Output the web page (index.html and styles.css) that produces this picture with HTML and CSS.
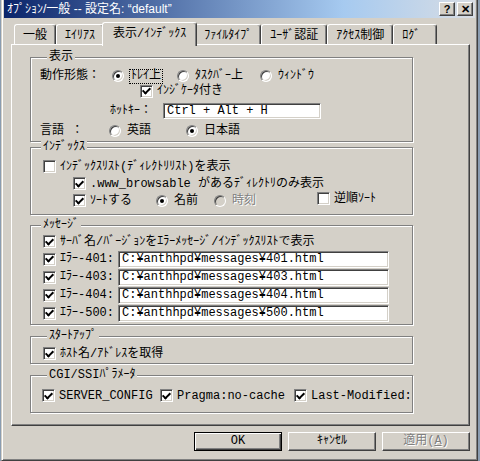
FILE: index.html
```html
<!DOCTYPE html>
<html lang="ja">
<head>
    <meta charset="UTF-8">
    <meta name="viewport" content="width=device-width, initial-scale=1.0">
    <title>オプション/一般</title>
    <link rel="stylesheet" href="styles.css">
</head>
<body>

<div class="window">
    <div class="titlebar">
        <span class="title">ｵﾌﾟｼｮﾝ/一般 -- 設定名: “default”</span>
        <div class="caption-buttons">
            <span class="caption-btn">?</span>
            <span class="caption-btn">✕</span>
        </div>
    </div>

    <div class="tabs">
        <div class="tab">一般</div>
        <div class="tab">ｴｲﾘｱｽ</div>
        <div class="tab active">表示/ｲﾝﾃﾞｯｸｽ</div>
        <div class="tab">ﾌｧｲﾙﾀｲﾌﾟ</div>
        <div class="tab">ﾕｰｻﾞ認証</div>
        <div class="tab">ｱｸｾｽ制御</div>
        <div class="tab tab-last">ﾛｸﾞ</div>
    </div>

    <div class="panel">
        <div class="group g-display">
            <div class="group-title indent">表示</div>
            <div class="row row-16">
                <span class="field-label mode-label">動作形態：</span>
                <span class="option opt-tray"><span class="radio on"></span><span class="focus">ﾄﾚｲ上</span></span>
                <span class="option opt-task"><span class="radio"></span>ﾀｽｸﾊﾞｰ上</span>
                <span class="option"><span class="radio"></span>ｳｨﾝﾄﾞｳ</span>
            </div>
            <div class="row row-14">
                <span class="option indicator"><span class="box on"></span>ｲﾝｼﾞｹｰﾀ付き</span>
            </div>
            <div class="row row-25">
                <span class="field-label hotkey-label">ﾎｯﾄｷｰ：</span>
                <span class="textbox hotkey">Ctrl + Alt + H</span>
            </div>
            <div class="row row-16">
                <span class="field-label lang-label">言語 ：</span>
                <span class="option opt-en"><span class="radio"></span>英語</span>
                <span class="option"><span class="radio on"></span>日本語</span>
            </div>
        </div>

        <div class="group g-index">
            <div class="group-title">ｲﾝﾃﾞｯｸｽ</div>
            <div class="row">
                <span class="option first"><span class="box"></span>ｲﾝﾃﾞｯｸｽﾘｽﾄ(ﾃﾞｨﾚｸﾄﾘﾘｽﾄ)を表示</span>
            </div>
            <div class="row">
                <span class="option sub"><span class="box on"></span>.www_browsable があるﾃﾞｨﾚｸﾄﾘのみ表示</span>
            </div>
            <div class="row">
                <span class="option sub opt-sort"><span class="box on"></span>ｿｰﾄする</span>
                <span class="option opt-name"><span class="radio on"></span>名前</span>
                <span class="option opt-time disabled"><span class="radio"></span>時刻</span>
                <span class="option raised"><span class="box"></span>逆順ｿｰﾄ</span>
            </div>
        </div>

        <div class="group g-message">
            <div class="group-title">ﾒｯｾｰｼﾞ</div>
            <div class="row">
                <span class="option first"><span class="box on"></span>ｻｰﾊﾞ名/ﾊﾞｰｼﾞｮﾝをｴﾗｰﾒｯｾｰｼﾞ/ｲﾝﾃﾞｯｸｽﾘｽﾄで表示</span>
            </div>
            <div class="row row-18">
                <span class="option first err-label"><span class="box on"></span>ｴﾗｰ-401:</span>
                <span class="textbox path">C:¥anthhpd¥messages¥401.html</span>
            </div>
            <div class="row row-18">
                <span class="option first err-label"><span class="box on"></span>ｴﾗｰ-403:</span>
                <span class="textbox path">C:¥anthhpd¥messages¥403.html</span>
            </div>
            <div class="row row-18">
                <span class="option first err-label"><span class="box on"></span>ｴﾗｰ-404:</span>
                <span class="textbox path">C:¥anthhpd¥messages¥404.html</span>
            </div>
            <div class="row row-18">
                <span class="option first err-label"><span class="box on"></span>ｴﾗｰ-500:</span>
                <span class="textbox path">C:¥anthhpd¥messages¥500.html</span>
            </div>
        </div>

        <div class="group g-startup">
            <div class="group-title indent">ｽﾀｰﾄｱｯﾌﾟ</div>
            <div class="row">
                <span class="option first"><span class="box on"></span>ﾎｽﾄ名/ｱﾄﾞﾚｽを取得</span>
            </div>
        </div>

        <div class="group g-cgi">
            <div class="group-title indent">CGI/SSIﾊﾟﾗﾒｰﾀ</div>
            <div class="row">
                <span class="option first opt-server"><span class="box on"></span>SERVER_CONFIG</span>
                <span class="option opt-pragma"><span class="box on"></span>Pragma:no-cache</span>
                <span class="option"><span class="box on"></span>Last-Modified:</span>
            </div>
        </div>
    </div>

    <div class="buttons">
        <button class="btn default">OK</button>
        <button class="btn">ｷｬﾝｾﾙ</button>
        <button class="btn" disabled>適用(<u>A</u>)</button>
    </div>
</div>

</body>
</html>
```

FILE: styles.css
```css
body {
    margin: 0;
    background-color: #8a9cb0;
    font-family: "Liberation Mono", "Noto Sans CJK JP", monospace;
    font-size: 12px;
    line-height: 16px;
    color: #000;
    overflow: hidden;
}
.window {
    box-sizing: border-box;
    width: 477px;
    height: 461px;
    margin-left: 1px;
    padding: 0 2px 2px 2px;
    background-color: #d4d0c8;
    border: 1px solid #404040;
    border-top: none;
    border-left-color: #d4d0c8;
    box-shadow: inset 1px 0 0 #fff, inset -1px -1px 0 #808080;
}

/* title bar */
.titlebar {
    display: flex;
    align-items: center;
    justify-content: space-between;
    height: 18px;
    padding: 0 2px 0 3px;
    background: linear-gradient(to right, #0a246a, #a6caf0 72%, #d8dde4);
    color: #fff;
}
.title {
    font-family: "Liberation Sans", "Noto Sans CJK JP", sans-serif;
    font-size: 12px;
    line-height: 18px;
}
.caption-buttons {
    display: flex;
    gap: 2px;
}
.caption-btn {
    box-sizing: border-box;
    display: flex;
    align-items: center;
    justify-content: center;
    width: 16px;
    height: 14px;
    background-color: #d4d0c8;
    color: #000;
    font: bold 11px/12px "Liberation Sans", sans-serif;
    border: 1px solid;
    border-color: #fff #404040 #404040 #fff;
    box-shadow: inset -1px -1px 0 #808080;
}

/* tabs */
.tabs {
    display: flex;
    align-items: flex-end;
    height: 24px;
    margin: 4px 0 -2px 10px;
}
.tab {
    box-sizing: border-box;
    height: 20px;
    margin-bottom: 2px;
    padding: 3px 8px 0;
    background-color: #d4d0c8;
    border: 1px solid #fff;
    border-bottom: none;
    border-right-color: #404040;
    border-radius: 3px 3px 0 0;
    box-shadow: inset -1px 0 0 #808080;
    white-space: nowrap;
}
.tab.active {
    position: relative;
    z-index: 1;
    height: 24px;
    margin: 0 -2px;
    padding: 3px 10px 0;
}
.tab-last {
    padding-right: 16px;
}

/* property page */
.panel {
    box-sizing: border-box;
    width: 459px;
    height: 382px;
    margin-left: 7px;
    padding: 12px 0 0 18px;
    border: 1px solid;
    border-color: #fff #404040 #404040 #fff;
    box-shadow: inset -1px -1px 0 #808080;
}
.group {
    box-sizing: border-box;
    width: 383px;
    border: 1px solid #808080;
    box-shadow: inset 1px 1px 0 #fff, 1px 1px 0 #fff;
}
.group-title {
    width: fit-content;
    margin: -7px 0 0 10px;
    padding: 0 2px;
    line-height: 12px;
    background-color: #d4d0c8;
}
.group-title.indent {
    margin-left: 16px;
}
.g-display {
    padding-bottom: 2px;
}
.g-display .group-title {
    margin-bottom: 5px;
}
.g-index {
    margin-top: 5px;
    padding-bottom: 5px;
}
.g-index .group-title {
    margin-bottom: 5px;
}
.g-message {
    margin-top: 10px;
    padding-bottom: 2px;
}
.g-message .group-title {
    margin-bottom: 2px;
}
.g-startup {
    margin-top: 11px;
    padding-bottom: 1px;
}
.g-startup .group-title {
    margin-bottom: 3px;
}
.g-cgi {
    margin-top: 11px;
    padding-bottom: 8px;
}
.g-cgi .group-title {
    margin-bottom: 6px;
}

/* rows */
.row {
    display: flex;
    align-items: center;
    height: 17px;
    white-space: nowrap;
}
.row-14 { height: 14px; }
.row-16 { height: 16px; }
.row-18 { height: 18px; }
.row-25 { height: 25px; }
.field-label {
    flex: none;
}
.mode-label {
    width: 72px;
    margin-left: 9px;
}
.hotkey-label {
    width: 53px;
    margin-left: 79px;
}
.lang-label {
    width: 69px;
    margin-left: 9px;
}
.option {
    display: flex;
    align-items: center;
    flex: none;
}
.opt-tray { width: 65px; }
.opt-task { width: 83px; }
.opt-en { width: 77px; }
.indicator { margin-left: 109px; }
.first { margin-left: 12px; }
.sub { margin-left: 42px; }
.opt-sort { width: 83px; }
.opt-name { width: 58px; }
.opt-time { width: 103px; }
.raised { margin-bottom: 4px; }
.err-label { width: 75px; }
.opt-server { width: 118px; margin-left: 11px; }
.opt-pragma { width: 134px; }
.focus {
    padding: 0 1px;
    line-height: 13px;
    outline: 1px dotted #000;
}
.disabled {
    color: #808080;
    text-shadow: 1px 1px 0 #fff;
}

/* controls */
.radio, .box {
    box-sizing: border-box;
    display: grid;
    place-items: center;
    flex: none;
    background-color: #fff;
    border: 1px solid;
    border-color: #808080 #fff #fff #808080;
    box-shadow: inset 1px 1px 0 #404040, inset -1px -1px 0 #d4d0c8;
}
.radio {
    width: 12px;
    height: 12px;
    margin-right: 6px;
    border-radius: 50%;
}
.disabled .radio {
    background-color: #d4d0c8;
}
.radio.on::after {
    content: '';
    width: 4px;
    height: 4px;
    border-radius: 50%;
    background-color: #000;
}
.box {
    width: 13px;
    height: 13px;
    margin-right: 4px;
}
.box.on::after {
    content: '';
    width: 3px;
    height: 6px;
    border: solid #000;
    border-width: 0 2px 2px 0;
    transform: translateY(-1px) rotate(45deg);
}
.textbox {
    box-sizing: border-box;
    flex: none;
    height: 17px;
    padding: 0 3px;
    background-color: #fff;
    border: 1px solid;
    border-color: #808080 #fff #fff #808080;
    box-shadow: inset 1px 1px 0 #404040, inset -1px -1px 0 #d4d0c8;
    line-height: 15px;
}
.hotkey {
    width: 158px;
    height: 16px;
    line-height: 14px;
}
.path {
    width: 271px;
}

/* dialog buttons */
.buttons {
    display: flex;
    justify-content: flex-end;
    gap: 6px;
    width: 459px;
    margin: 6px 0 0 7px;
}
.btn {
    box-sizing: border-box;
    width: 88px;
    height: 19px;
    padding: 0;
    font: inherit;
    line-height: 15px;
    color: #000;
    background-color: #d4d0c8;
    border: 1px solid;
    border-color: #fff #404040 #404040 #fff;
    box-shadow: inset -1px -1px 0 #808080;
}
.btn.default {
    border-color: #000;
    box-shadow: inset 1px 1px 0 #fff, inset -1px -1px 0 #404040, inset -2px -2px 0 #808080;
}
.btn:disabled {
    color: #808080;
    text-shadow: 1px 1px 0 #fff;
}
```
